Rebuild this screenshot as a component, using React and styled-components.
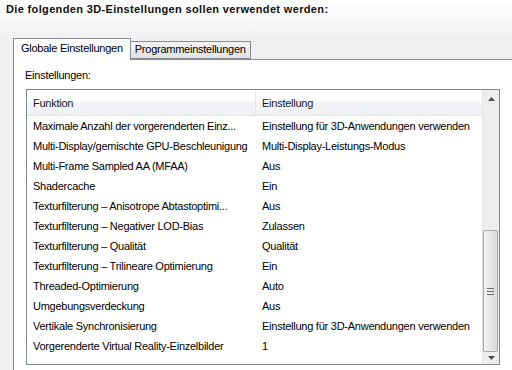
import React from "react";
import styled, { createGlobalStyle } from "styled-components";

const Global = createGlobalStyle`
  html, body { margin: 0; padding: 0; }
  body {
    width: 512px;
    height: 370px;
    overflow: hidden;
    font-family: Tahoma, "Liberation Sans", Arial, sans-serif;
    font-size: 11px;
    letter-spacing: -0.25px;
    color: #000;
  }
`;

const Page = styled.div`
  width: 512px;
  height: 370px;
  display: flex;
  flex-direction: column;
  background: linear-gradient(#fefefe, #f0f0f0 40px, #f0f0f0);
`;

const Title = styled.div`
  font-weight: bold;
  letter-spacing: 0.35px;
  padding: 3px 0 0 6px;
  height: 38px;
  box-sizing: border-box;
  color: #111;
`;

const TabStrip = styled.div`
  display: flex;
  align-items: flex-end;
  margin-left: 13px;
  height: 21px;
  position: relative;
  z-index: 1;
`;

const Tab = styled.div`
  box-sizing: border-box;
  border: 1px solid #898c95;
  border-bottom: ${(p) => (p.$active ? "none" : "1px solid #898c95")};
  height: ${(p) => (p.$active ? "22px" : "18px")};
  padding: ${(p) => (p.$active ? "3px 7px 0 7px" : "1px 4px 0 4px")};
  margin-left: ${(p) => (p.$active ? "0" : "-1px")};
  margin-bottom: ${(p) => (p.$active ? "-1px" : "0")};
  background: ${(p) => (p.$active ? "#fff" : "linear-gradient(#f3f3f3, #e3e3e3)")};
  white-space: nowrap;
`;

const Panel = styled.div`
  flex: 1;
  margin-left: 13px;
  border-top: 1px solid #898c95;
  border-left: 1px solid #898c95;
  background: #fff;
  display: flex;
  flex-direction: column;
  padding: 9px 0 5px 12px;
  min-height: 0;
`;

const Label = styled.div`
  height: 20px;
  margin-left: -1px;
`;

const ListBox = styled.div`
  flex: 1;
  width: 474px;
  box-sizing: border-box;
  border: 1px solid #828790;
  display: flex;
  min-height: 0;
`;

const Table = styled.div`
  flex: 1;
  display: flex;
  flex-direction: column;
`;

const Header = styled.div`
  display: grid;
  grid-template-columns: 229px 1fr;
  height: 25px;
  background: linear-gradient(#ffffff, #ffffff 45%, #f3f4f6 50%, #f1f2f4);
  border-bottom: 1px solid #e5e5e5;
`;

const HeadCell = styled.div`
  display: flex;
  align-items: center;
  padding-left: 6px;
  color: #1a1a1a;
  border-right: ${(p) => (p.$last ? "none" : "1px solid #e5e5e5")};
`;

const Row = styled.div`
  display: grid;
  grid-template-columns: 229px 1fr;
  height: 20px;
  align-items: center;
`;

const Cell = styled.div`
  padding-left: 6px;
  white-space: nowrap;
  overflow: hidden;
`;

const ScrollBar = styled.div`
  width: 17px;
  display: flex;
  flex-direction: column;
  background: #eeeeee;
  border-left: 1px solid #e2e2e2;
  box-sizing: border-box;
`;

const Arrow = styled.div`
  height: ${(p) => (p.$down ? "12px" : "17px")};
  display: flex;
  align-items: center;
  justify-content: center;
`;

const Track = styled.div`
  flex: 1;
  display: flex;
  flex-direction: column;
  justify-content: flex-end;
`;

const Thumb = styled.div`
  height: 122px;
  margin: 0 1px 0 0;
  box-sizing: border-box;
  border: 1px solid #a9a9a9;
  border-radius: 2px;
  background: linear-gradient(90deg, #f3f3f3, #e6e6e6 50%, #d9d9d9);
  display: flex;
  align-items: center;
  justify-content: center;
`;

const rows = [
  ["Maximale Anzahl der vorgerenderten Einz...", "Einstellung für 3D-Anwendungen verwenden"],
  ["Multi-Display/gemischte GPU-Beschleunigung", "Multi-Display-Leistungs-Modus"],
  ["Multi-Frame Sampled AA (MFAA)", "Aus"],
  ["Shadercache", "Ein"],
  ["Texturfilterung – Anisotrope Abtastoptimi...", "Aus"],
  ["Texturfilterung – Negativer LOD-Bias", "Zulassen"],
  ["Texturfilterung – Qualität", "Qualität"],
  ["Texturfilterung – Trilineare Optimierung", "Ein"],
  ["Threaded-Optimierung", "Auto"],
  ["Umgebungsverdeckung", "Aus"],
  ["Vertikale Synchronisierung", "Einstellung für 3D-Anwendungen verwenden"],
  ["Vorgerenderte Virtual Reality-Einzelbilder", "1"],
];

function Triangle({ down }) {
  return (
    <svg width="7" height="4" viewBox="0 0 7 4">
      <path d={down ? "M0 0H7L3.5 4Z" : "M0 4H7L3.5 0Z"} fill="#4d4d4d" />
    </svg>
  );
}

function Grip() {
  return (
    <svg width="7" height="7" viewBox="0 0 7 7">
      <path d="M0 0.5H7M0 3.5H7M0 6.5H7" stroke="#6b6b6b" strokeWidth="1" />
    </svg>
  );
}

export default function App() {
  return (
    <Page>
      <Global />
      <Title>Die folgenden 3D-Einstellungen sollen verwendet werden:</Title>
      <TabStrip>
        <Tab $active>Globale Einstellungen</Tab>
        <Tab>Programmeinstellungen</Tab>
      </TabStrip>
      <Panel>
        <Label>Einstellungen:</Label>
        <ListBox>
          <Table>
            <Header>
              <HeadCell>Funktion</HeadCell>
              <HeadCell $last>Einstellung</HeadCell>
            </Header>
            {rows.map(([f, v]) => (
              <Row key={f}>
                <Cell>{f}</Cell>
                <Cell>{v}</Cell>
              </Row>
            ))}
          </Table>
          <ScrollBar>
            <Arrow><Triangle /></Arrow>
            <Track>
              <Thumb><Grip /></Thumb>
            </Track>
            <Arrow $down><Triangle down /></Arrow>
          </ScrollBar>
        </ListBox>
      </Panel>
    </Page>
  );
}
